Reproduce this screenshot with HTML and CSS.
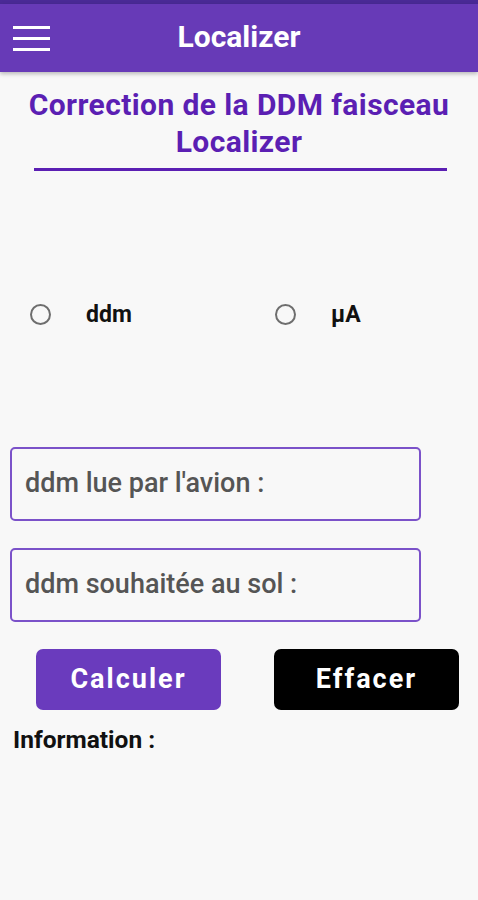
FILE: index.html
```html
<!DOCTYPE html>
<html lang="fr">

<head>
    <meta charset="UTF-8">
    <meta name="viewport" content="width=device-width, initial-scale=1.0">
    <title>Localizer</title>
    <link rel="stylesheet" href="styles.css">
</head>

<body>
    <div class="status"></div>

    <header class="appbar">
        <div class="menu">
            <span></span>
            <span></span>
            <span></span>
        </div>
        <h1>Localizer</h1>
    </header>

    <div class="wrap">
        <h2 class="title">Correction de la DDM faisceau<br>Localizer</h2>
        <div class="line"></div>

        <div class="radios">
            <label class="radio"><span class="circle"></span>ddm</label>
            <label class="radio"><span class="circle"></span>µA</label>
        </div>

        <div class="fields">
            <div class="field">ddm lue par l'avion :</div>
            <div class="field">ddm souhaitée au sol :</div>
        </div>

        <div class="buttons">
            <button class="btn calc">Calculer</button>
            <button class="btn clear">Effacer</button>
        </div>

        <p class="info">Information :</p>
    </div>
</body>

</html>
```

FILE: styles.css
```css
body {
    margin: 0;
    background: #f8f8f8;
    font-family: Roboto, "Liberation Sans", sans-serif;
}

.status {
    height: 4px;
    background: #4a2a96;
}

.appbar {
    height: 68px;
    background: #673ab7;
    position: relative;
    display: flex;
    align-items: center;
    justify-content: center;
    box-shadow: 0 2px 4px rgba(0, 0, 0, 0.25);
}

.appbar h1 {
    margin: -4px 0 0;
    color: #fff;
    font-size: 30px;
    font-weight: 700;
}

.menu {
    position: absolute;
    left: 13px;
    top: 22px;
    width: 37px;
    display: flex;
    flex-direction: column;
    gap: 8px;
}

.menu span {
    height: 3px;
    background: #fff;
}

.title {
    margin: 14px 0 0;
    text-align: center;
    color: #5b1fb3;
    font-size: 30px;
    font-weight: 700;
    line-height: 37px;
    letter-spacing: 0.4px;
}

.line {
    height: 3px;
    background: #5b1fb3;
    margin: 8px 31px 0 34px;
}

.radios {
    display: flex;
    margin-top: 132px;
    height: 22px;
    align-items: center;
}

.radio {
    display: flex;
    align-items: center;
    font-size: 23px;
    font-weight: 700;
    color: #111;
    width: 245px;
    flex: none;
}

.radio + .radio {
    width: auto;
}

.circle {
    width: 17px;
    height: 17px;
    border: 2px solid #6e6e6e;
    border-radius: 50%;
    margin-left: 30px;
    margin-right: 35px;
}

.fields {
    display: flex;
    flex-direction: column;
    gap: 27px;
    margin-top: 122px;
}

.field {
    width: 411px;
    height: 74px;
    margin-left: 10px;
    border: 2px solid #7b52c9;
    border-radius: 5px;
    display: flex;
    align-items: center;
    padding: 0 0 3px 13px;
    box-sizing: border-box;
    font-size: 27px;
    font-weight: 500;
    color: #555;
}

.buttons {
    display: flex;
    margin-top: 27px;
    padding-left: 36px;
    gap: 53px;
}

.btn {
    width: 185px;
    height: 61px;
    border: none;
    border-radius: 7px;
    color: #fff;
    font-family: Roboto, "Liberation Sans", sans-serif;
    font-size: 27px;
    font-weight: 700;
    letter-spacing: 2px;
    padding-bottom: 3px;
}

.calc {
    background: #6a3bbd;
}

.clear {
    background: #000;
}

.info {
    margin: 15px 0 0 13px;
    font-size: 24.5px;
    font-weight: 700;
    color: #111;
}
```
